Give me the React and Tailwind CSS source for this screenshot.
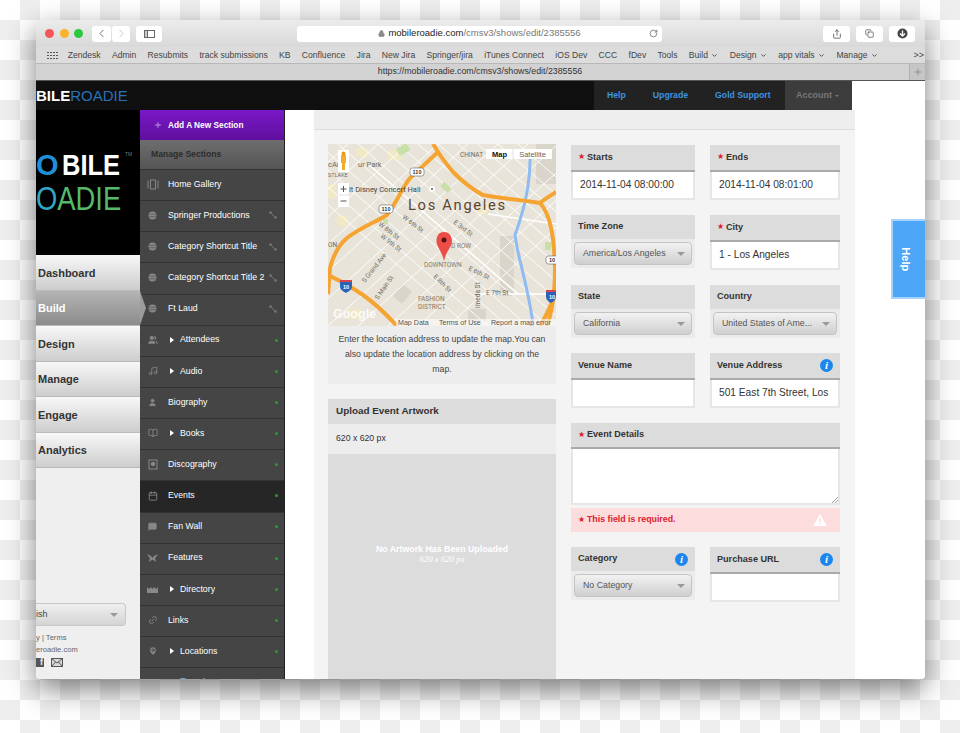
import { ChevronLeft, ChevronRight, Lock, RotateCw, Share, Copy, Plus, ChevronDown, Users, Music, User, BookOpen, Calendar, MessageSquare, Link2, MapPin } from "lucide-react";

const bookmarks = ["Zendesk", "Admin", "Resubmits", "track submissions", "KB", "Confluence", "Jira", "New Jira", "Springer/jira", "iTunes Connect", "iOS Dev", "CCC", "fDev", "Tools"];
const bookmarkMenus = ["Build", "Design", "app vitals", "Manage"];

const leftNav = [
  { label: "Dashboard" },
  { label: "Build", active: true },
  { label: "Design" },
  { label: "Manage" },
  { label: "Engage" },
  { label: "Analytics" },
];

// small drawn glyphs for the ones the icon set doesn't have
const GalleryIcon = () => (
  <svg width="12" height="11" viewBox="0 0 12 11" fill="none" stroke="currentColor">
    <rect x="3.500" y="1" width="5" height="9" />
    <path d="M1 1.500v8M11 1.500v8" />
  </svg>
);
const BallIcon = () => (
  <svg width="9" height="9" viewBox="0 0 9 9">
    <circle cx="4.500" cy="4.500" r="4" fill="currentColor" />
    <path d="M0.500 3.200h8M0.500 5.800h8" stroke="#454545" strokeWidth="0.600" />
  </svg>
);
const DiscIcon = () => (
  <svg width="10" height="11" viewBox="0 0 10 11" fill="none" stroke="currentColor">
    <rect x="1" y="1" width="8" height="9" />
    <circle cx="5" cy="5" r="1.800" fill="currentColor" />
  </svg>
);
const CrossIcon = () => (
  <svg width="11" height="9" viewBox="0 0 11 9" fill="currentColor">
    <path d="M0 0 L4 2 L5.500 4 L7 2 L11 0 L8 4.500 L9 8 L5.500 5.500 L2 8 L3 4.500Z" />
  </svg>
);
const CrownIcon = () => (
  <svg width="11" height="7" viewBox="0 0 11 7" fill="currentColor">
    <path d="M0 1 L2 3 L4 1 L5.500 3 L7 1 L9 3 L11 1 V7 H0Z" />
  </svg>
);

const sections = [
  { label: "Home Gallery", icon: GalleryIcon },
  { label: "Springer Productions", icon: BallIcon, link: true },
  { label: "Category Shortcut Title", icon: BallIcon, link: true },
  { label: "Category Shortcut Title 2", icon: BallIcon, link: true },
  { label: "Ft Laud", icon: BallIcon, link: true },
  { label: "Attendees", icon: () => <Users size={10} fill="currentColor" />, arrow: true, dot: true },
  { label: "Audio", icon: () => <Music size={10} />, arrow: true, dot: true },
  { label: "Biography", icon: () => <User size={9} fill="currentColor" />, dot: true },
  { label: "Books", icon: () => <BookOpen size={10} />, arrow: true, dot: true },
  { label: "Discography", icon: DiscIcon, dot: true },
  { label: "Events", icon: () => <Calendar size={10} />, dot: true, current: true },
  { label: "Fan Wall", icon: () => <MessageSquare size={9} fill="currentColor" />, dot: true },
  { label: "Features", icon: CrossIcon, dot: true },
  { label: "Directory", icon: CrownIcon, arrow: true, dot: true },
  { label: "Links", icon: () => <Link2 size={10} className="-rotate-45" />, dot: true },
  { label: "Locations", icon: () => <MapPin size={10} fill="currentColor" stroke="#454545" />, arrow: true, dot: true },
  { label: "Mailing List", icon: () => <Users size={10} />, dot: true },
];

const ToolButton = ({ children, className = "" }) => (
  <div className={`flex h-[16px] items-center justify-center rounded-[3px] bg-white text-[#555] ${className}`}>
    {children}
  </div>
);

const Star = () => <span className="w-[6px] font-['DejaVu_Sans',sans-serif] text-[8px] leading-none text-[#e0202c]">★</span>;

const InfoDot = () => (
  <span className="flex h-[13px] w-[13px] items-center justify-center rounded-full bg-[#1c86ee] font-['Liberation_Serif',serif] text-[11px] font-bold italic leading-none text-white">
    i
  </span>
);

const Label = ({ text, required, info, className = "" }) => (
  <div className={`flex items-center justify-between bg-[#dcdcdc] px-[7px] pt-px text-[9.100px] font-bold text-[#333] ${className}`}>
    <span className="flex items-center gap-[3px]">
      {required && <Star />}
      {text}
    </span>
    {info && <InfoDot />}
  </div>
);

const TextField = ({ label, value, required, info, className = "" }) => (
  <div className={className}>
    <Label text={label} required={required} info={info} className="h-[27px] border-b-2 border-[#aaa]" />
    <div className="flex h-[28px] items-center overflow-hidden whitespace-nowrap border-x-2 border-b-2 border-[#e6e6e6] bg-white px-[7px] pt-px text-[10.200px] text-[#333]">
      {value}
    </div>
  </div>
);

const SelectField = ({ label, value, info, className = "" }) => (
  <div className={`bg-[#ebebeb] ${className}`}>
    <Label text={label} info={info} className="h-[24px]" />
    <div className="p-[3px]">
      <div className="flex h-[23px] items-center justify-between rounded-[4px] border border-[#c4c4c4] bg-gradient-to-b from-[#f2f2f2] to-[#cfcfcf] pl-[8px] pr-[6px] pt-px text-[8.800px] text-[#555]">
        <span>{value}</span>
        <span className="h-0 w-0 border-x-[4px] border-t-[4px] border-x-transparent border-t-[#999]" />
      </div>
    </div>
  </div>
);

const streetsA = [-70, -50, -30, -10, 10, 30, 50, 70, 90, 110, 130, 150, 170, 190];
const streetsB = [20, 50, 80, 110, 140, 170, 200, 230, 260, 290, 320];

// rough street map, labels stay real text
const MapDrawing = () => (
  <svg viewBox="0 0 228 182" className="block h-[182px] w-[228px]">
    <rect width="228" height="182" fill="#e8e4da" />
    <g fill="#f1e8c6">
      <rect x="10" y="72" width="10" height="10" />
      <rect x="28" y="4" width="12" height="9" />
      <rect x="150" y="62" width="10" height="8" />
      <rect x="0" y="40" width="8" height="14" />
      <rect x="60" y="6" width="14" height="10" />
      <rect x="20" y="165" width="14" height="10" />
    </g>
    <g fill="#d9d5cb">
      <rect x="208" y="0" width="20" height="40" />
      <rect x="172" y="92" width="14" height="60" />
      <rect x="140" y="165" width="18" height="12" />
      <rect x="75" y="140" width="12" height="16" transform="rotate(40 75 140)" />
    </g>
    <g stroke="#ffffff" strokeWidth="0.900" fill="none">
      {streetsA.map((x) => <line key={x} x1={x} y1="0" x2={x + 210} y2="182" />)}
      {streetsB.map((x) => <line key={x} x1={x} y1="0" x2={x - 200} y2="182" />)}
    </g>
    <g stroke="#ffffff" strokeWidth="1.600" fill="none">
      <path d="M40 20 L190 150 M150 150 H228 M160 70 L228 80" />
    </g>
    <g fill="#c9dfa8">
      <rect x="68" y="5" width="12" height="8" transform="rotate(-30 68 5)" />
      <rect x="116" y="38" width="10" height="6" transform="rotate(40 116 38)" />
      <rect x="55" y="75" width="5" height="5" />
      <rect x="217" y="98" width="6" height="8" />
    </g>
    <path d="M202 5 C203 30 200 55 187 91 C190 115 197 130 204 173 L205 182" fill="none" stroke="#8ebcf2" strokeWidth="3" />
    <g fill="none" stroke="#f5a431" strokeWidth="4">
      <path d="M0 150 L2 124 C6 108 12 100 19 94 C35 82 48 78 59 71 C68 60 74 44 82 34 L110 8 L105 0" />
      <path d="M110 8 C115 16 120 22 125 28 C135 38 145 46 155 51 C170 54 195 56 212 59 C222 70 226 90 227 124 C227 145 225 165 219 182" />
      <path d="M212 59 C217 55 222 52 228 48" />
      <path d="M0 131 C15 138 25 144 35 151 C48 160 58 170 69 182" />
      <path d="M228 146 C224 160 218 172 212 182" />
    </g>
    <g fontFamily="Roboto, sans-serif" fill="#6f6a5f" fontSize="6.500">
      <text x="74" y="74" transform="rotate(38 74 74)">W 6th St</text>
      <text x="50" y="81" transform="rotate(38 50 81)">W 8th St</text>
      <text x="52" y="93" transform="rotate(38 52 93)">W 9th St</text>
      <text x="125" y="79" transform="rotate(38 125 79)">E 3rd St</text>
      <text x="140" y="126" transform="rotate(25 140 126)">E 6th St</text>
      <text x="158" y="151">E 7th St</text>
      <text x="105" y="133" transform="rotate(45 105 133)">E 8th St</text>
      <text x="37" y="139" transform="rotate(-52 37 139)">S Grand Ave</text>
      <text x="50" y="156" transform="rotate(-55 50 156)">S Main St</text>
      <text x="152" y="164" transform="rotate(-90 152 164)">imeda St</text>
      <g fill="#8a7a60">
        <text x="123" y="104">D ROW</text>
        <text x="96" y="123">DOWNTOWN</text>
        <text x="90" y="157">FASHION</text>
        <text x="90" y="164.500">DISTRICT</text>
      </g>
      <text x="0" y="23" fontSize="7.500">cAr</text>
      <text x="30" y="23" fontSize="7.500">ur Park</text>
      <text x="0" y="33" fontSize="5.500">STLAKE</text>
      <text x="0" y="103">ON</text>
      <text x="132" y="13">CHINAT</text>
      <text x="21" y="48" fontSize="7.500" fill="#444">lt Disney Concert Hall</text>
    </g>
    <circle cx="104" cy="45" r="3" fill="#fff" />
    <circle cx="104" cy="45" r="1" fill="#555" />
    <text x="80" y="66" fontFamily="Roboto, sans-serif" fontSize="14.700" letterSpacing="1.700" fill="#5b4632">Los Angeles</text>
    <g fontFamily="Liberation Sans, sans-serif" fontWeight="700" fontSize="5.500" textAnchor="middle" fill="#333">
      <rect x="82" y="24" width="14" height="8" rx="2.500" fill="#fff" stroke="#444" strokeWidth="0.500" />
      <text x="89" y="30">110</text>
      <rect x="51" y="61" width="14" height="8" rx="2.500" fill="#fff" stroke="#444" strokeWidth="0.500" />
      <text x="58" y="67">110</text>
      <rect x="218" y="112" width="12" height="8" rx="2.500" fill="#fff" stroke="#444" strokeWidth="0.500" />
      <text x="224" y="118">10</text>
    </g>
    <g fontFamily="Liberation Sans, sans-serif" fontWeight="700" fontSize="5.500" textAnchor="middle" fill="#fff">
      <path d="M12 136 h12 v6 c0 4 -3 5 -6 7 c-3 -2 -6 -3 -6 -7Z" fill="#2b63b8" />
      <rect x="12" y="136" width="12" height="2" fill="#d9434a" />
      <text x="18" y="145">10</text>
      <path d="M218 146 h10 v6 c0 4 -2 5 -5 7 c-3 -2 -5 -3 -5 -7Z" fill="#2b63b8" />
      <rect x="218" y="146" width="10" height="2" fill="#d9434a" />
      <text x="224" y="155">10</text>
    </g>
    <path d="M116 88 C110 88 108.500 93 108.500 97 C108.500 103 114 107 116 117 C118 107 124 103 124 97 C124 93 122 88 116 88Z" fill="#ec4d47" />
    <circle cx="116" cy="96" r="2.500" fill="#501512" />
    <text x="5" y="174" fontFamily="Liberation Sans, sans-serif" fontWeight="700" fontSize="12.500" fill="#fff" fillOpacity="0.850">Google</text>
    <rect x="68" y="175" width="160" height="7" fill="#fff" fillOpacity="0.550" />
    <g fontFamily="Liberation Sans, sans-serif" fontSize="7.100" fill="#555">
      <text x="70" y="181">Map Data</text>
      <text x="111" y="181">Terms of Use</text>
      <text x="163" y="181">Report a map error</text>
    </g>
    <rect x="158" y="5" width="66" height="10" fill="#fff" />
    <line x1="185" y1="5" x2="185" y2="15" stroke="#ccc" strokeWidth="0.600" />
    <text x="171.500" y="13" fontFamily="Liberation Sans, sans-serif" fontSize="7.500" fontWeight="700" textAnchor="middle" fill="#111">Map</text>
    <text x="204.500" y="13" fontFamily="Liberation Sans, sans-serif" fontSize="7.500" textAnchor="middle" fill="#666">Satellite</text>
    <rect x="10" y="6" width="11" height="22" fill="#fff" />
    <path d="M13 11 h5 v8 h-1 v7 h-3 v-7 h-1Z" fill="#f2ab2e" />
    <circle cx="15.500" cy="9.500" r="2" fill="#e89a1c" />
    <rect x="10" y="39" width="11" height="24" fill="#fff" />
    <line x1="10" y1="51" x2="21" y2="51" stroke="#ccc" strokeWidth="0.600" />
    <path d="M12.500 45 h6 M15.500 42 v6 M12.500 57 h6" stroke="#555" strokeWidth="1" />
  </svg>
);

const App = () => {
  return (
    <div className="h-[733px] w-[960px] overflow-hidden bg-[conic-gradient(#eeeeee_25%,#ffffff_25%_50%,#eeeeee_50%_75%,#ffffff_75%)] bg-[length:40px_40px] pl-[36px] pt-[20px] font-['Liberation_Sans',sans-serif]">
      <div className="flex h-[659px] w-[889px] flex-col overflow-hidden rounded-[4px] bg-white shadow-[0_10px_28px_rgba(0,0,0,0.5)]">
        {/* safari toolbar */}
        <div className="flex h-[27px] items-center bg-gradient-to-b from-[#ececec] to-[#d8d8d8] pl-[9px] pr-[6px]">
          <div className="flex gap-[5.500px]">
            <span className="h-[9px] w-[9px] rounded-full bg-[#f4575a]" />
            <span className="h-[9px] w-[9px] rounded-full bg-[#f9b42c]" />
            <span className="h-[9px] w-[9px] rounded-full bg-[#2ec840]" />
          </div>
          <div className="ml-[9px] flex gap-px">
            <ToolButton className="w-[19px]"><ChevronLeft size={13} strokeWidth={1.500} /></ToolButton>
            <ToolButton className="w-[18px] text-[#bbb]"><ChevronRight size={13} strokeWidth={1.500} /></ToolButton>
          </div>
          <ToolButton className="ml-[6px] w-[26px]">
            <span className="flex h-[8px] w-[11px] border border-[#666]"><span className="w-[3px] border-r border-[#666] bg-[#ccc]" /></span>
          </ToolButton>
          <div className="relative ml-[135px] flex h-[16px] w-[365px] items-center justify-center rounded-[3px] bg-white text-[9.500px] text-[#777]">
            <Lock size={7} className="mr-[3px] text-[#888]" fill="#888" />
            <span><span className="text-[#222]">mobileroadie.com</span>/cmsv3/shows/edit/2385556</span>
            <RotateCw size={9} className="absolute right-[4px] text-[#666]" />
          </div>
          <ToolButton className="ml-[161px] w-[27px]"><Share size={10} /></ToolButton>
          <ToolButton className="ml-[6px] w-[27px]"><Copy size={9} /></ToolButton>
          <ToolButton className="ml-[6px] w-[26px]">
            <svg width="11" height="11" viewBox="0 0 11 11">
              <circle cx="5.500" cy="5.500" r="5" fill="#444" />
              <path d="M5.500 2.500v5M3 5.500l2.500 2.500 2.500-2.500" stroke="#fff" strokeWidth="1.300" fill="none" />
            </svg>
          </ToolButton>
        </div>

        {/* bookmarks */}
        <div className="relative flex h-[17px] items-center border-b border-[#b8b8b8] bg-[#dcdcdc] pt-px text-[8.600px] text-[#444]">
          <span className="ml-[11px] grid grid-cols-4 gap-[1.300px]">
            {Array.from({ length: 12 }).map((_, i) => (
              <span key={i} className="h-[1.700px] w-[1.700px] bg-[#555]" />
            ))}
          </span>
          <div className="ml-[10px] flex gap-[11.300px]">
            {bookmarks.map((name) => <span key={name}>{name}</span>)}
            {bookmarkMenus.map((name) => (
              <span key={name} className="flex items-center gap-[3.500px]">{name} <ChevronDown size={7} strokeWidth={3} /></span>
            ))}
          </div>
          <span className="absolute right-[1px] text-[9px]">&gt;&gt;</span>
        </div>

        {/* tab strip */}
        <div className="flex h-[17px] items-center border-b border-[#555] bg-[#d2d2d2] text-[8.800px] text-[#333]">
          <span className="flex-1 pl-[15px] text-center">https://mobileroadie.com/cmsv3/shows/edit/2385556</span>
          <span className="flex h-full w-[16px] items-center justify-center border-l border-[#b0b0b0] bg-[#c6c6c6] text-[#888]"><Plus size={10} /></span>
        </div>

        {/* app header */}
        <div className="flex h-[29px] items-stretch bg-white">
          <div className="flex w-[558px] items-center overflow-hidden bg-[#0f0f0f] text-[15px] leading-none">
            <span className="font-bold text-white">BILE</span>
            <span className="font-light text-[#2a72b8]">ROADIE</span>
          </div>
          <div className="flex w-[191px] items-center bg-[#222] pl-[13px] text-[8.700px] font-bold text-[#3d94e0]">
            <span>Help</span>
            <span className="ml-[27px]">Upgrade</span>
            <span className="ml-[27px]">Gold Support</span>
          </div>
          <div className="flex w-[67px] items-center gap-[3px] bg-[#3c3c3c] pl-[11px] text-[9px] font-bold text-[#777]">
            Account
            <span className="h-0 w-0 border-x-[2px] border-t-[2px] border-x-transparent border-t-[#777]" />
          </div>
        </div>

        <div className="flex min-h-0 flex-1">
          {/* left column */}
          <div className="relative z-10 flex w-[104px] shrink-0 flex-col bg-[#efefef]">
            <div className="relative flex h-[145px] flex-col justify-center overflow-hidden bg-black leading-none">
              <div className="flex whitespace-nowrap text-[29px] font-bold text-white">
                <span className="w-[26px] text-[#1f8fd8]">O</span>
                <span className="origin-left scale-x-[0.88]">BILE</span>
              </div>
              <div className="mt-[2px] flex origin-left scale-x-[0.83] whitespace-nowrap text-[33px] font-light text-[#55b96a]">
                <span className="text-[#2fa7c4]">O</span>ADIE
              </div>
              <span className="absolute left-[89px] top-[42px] text-[5px] text-[#777]">TM</span>
            </div>
            {leftNav.map((item) => (
              <div
                key={item.label}
                className={`relative flex h-[35.500px] items-center border-b border-[#bbb] pl-[2px] pt-[1px] text-[11px] font-bold ${item.active ? "bg-gradient-to-b from-[#b5b5b5] to-[#8b8b8b] text-white" : "bg-gradient-to-b from-[#f8f8f8] to-[#cdcdcd] text-[#333]"}`}
              >
                {item.label}
                {item.active && (
                  <span className="absolute left-full top-0 h-0 w-0 border-y-[17px] border-l-[6px] border-y-transparent border-l-[#9c9c9c]" />
                )}
              </div>
            ))}
            <div className="mt-auto pb-[12px]">
              <div className="flex h-[23px] w-[90px] items-center justify-between rounded-r-[4px] border border-l-0 border-[#c8c8c8] bg-gradient-to-b from-[#f0f0f0] to-[#d4d4d4] pr-[7px] text-[9px] text-[#444]">
                <span>ish</span>
                <span className="h-0 w-0 border-x-[4px] border-t-[4px] border-x-transparent border-t-[#999]" />
              </div>
              <div className="mt-[6px] text-[7.600px] leading-[12px] text-[#666]">
                <div>y | Terms</div>
                <div>eroadie.com</div>
              </div>
              <div className="mt-[2px] flex items-center gap-[7px]">
                <span className="flex h-[9px] w-[8px] items-end justify-end bg-[#555] pr-[1px] text-[9px] font-bold leading-none text-[#efefef]">f</span>
                <svg width="12" height="9" viewBox="0 0 12 9" fill="#d8d8d8" stroke="#555">
                  <rect x="0.500" y="0.500" width="11" height="8" />
                  <path d="M0.500 0.500L6 5l5.500-4.500M0.500 8.500L4.500 4M11.500 8.500L7.500 4" fill="none" />
                </svg>
              </div>
            </div>
          </div>

          {/* section list */}
          <div className="flex w-[145px] shrink-0 flex-col overflow-hidden border-r border-[#222] bg-[#444]">
            <div className="flex h-[30px] shrink-0 items-center bg-gradient-to-b from-[#7a18c8] to-[#5f0f9e] pl-[14px] text-[8.300px] font-bold text-white">
              <Plus size={8} strokeWidth={4} className="mr-[6px] text-[#a878d8]" />
              Add A New Section
            </div>
            <div className="flex h-[29px] shrink-0 items-center bg-gradient-to-b from-[#6e6e6e] to-[#555] pl-[11px] text-[8.600px] font-bold text-[#2c2c2c]">
              Manage Sections
            </div>
            {sections.map((s) => {
              const Icon = s.icon;
              return (
                <div
                  key={s.label}
                  className={`flex h-[31.150px] shrink-0 items-center border-t border-[#333] pb-[1.500px] pr-[5px] text-[8.750px] text-white ${s.current ? "bg-[#262626]" : "bg-[#454545]"}`}
                >
                  <span className="flex w-[28px] shrink-0 justify-center pr-[3px] text-[#888]"><Icon /></span>
                  {s.arrow && <span className="ml-[2px] mr-[6px] h-0 w-0 border-y-[3.500px] border-l-[4px] border-y-transparent border-l-white" />}
                  <span className="flex-1 whitespace-nowrap">{s.label}</span>
                  {s.link && (
                    <svg width="8" height="8" viewBox="0 0 8 8" className="mr-[2px] text-[#777]">
                      <path d="M1.500 1.500L6.500 6.500" stroke="currentColor" />
                      <circle cx="1.500" cy="1.500" r="1.300" fill="currentColor" />
                      <circle cx="6.500" cy="6.500" r="1.300" fill="currentColor" />
                    </svg>
                  )}
                  {s.dot && <span className="mr-[1px] h-[3px] w-[3px] rounded-full bg-[#2f9a2f]" />}
                </div>
              );
            })}
          </div>

          {/* main content */}
          <div className="relative min-w-0 flex-1 bg-white pl-[29px]">
            <div className="h-full w-[541px] bg-[#f4f4f4]">
              <div className="h-[20px] border-b border-[#ddd] bg-[#eeeeee]" />
              <div className="flex gap-[15px] pl-[14px] pt-[14px]">
                {/* map column */}
                <div className="w-[228px]">
                  <MapDrawing />
                  <div className="h-[58px] bg-[#ededed] px-[8px] pt-[6px] text-center text-[8.700px] leading-[15px] text-[#444]">
                    Enter the location address to update the map.You can also update the location address by clicking on the map.
                  </div>
                  <div className="mt-[15px] flex h-[25px] items-center bg-[#dcdcdc] px-[8px] text-[9.900px] font-bold text-[#333]">
                    Upload Event Artwork
                  </div>
                  <div className="flex h-[30px] items-center bg-[#ededed] px-[8px] text-[8.700px] text-[#333]">620 x 620 px</div>
                  <div className="flex h-[226px] flex-col items-center bg-[#dcdcdc] pt-[91px] text-[8.800px] font-bold leading-[9px] text-white">
                    <span>No Artwork Has Been Uploaded</span>
                    <span className="mt-[1px] font-['Liberation_Serif',serif] font-normal italic">620 x 620 px</span>
                  </div>
                </div>

                {/* form column */}
                <div className="mt-[0.500px] w-[269px]">
                  <div className="flex justify-between">
                    <TextField label="Starts" required value="2014-11-04 08:00:00" className="w-[124px]" />
                    <TextField label="Ends" required value="2014-11-04 08:01:00" className="w-[130px]" />
                  </div>
                  <div className="mt-[15px] flex items-start justify-between">
                    <SelectField label="Time Zone" value="America/Los Angeles" className="w-[124px]" />
                    <TextField label="City" required value="1 - Los Angeles" className="w-[130px]" />
                  </div>
                  <div className="mt-[15px] flex items-start justify-between">
                    <SelectField label="State" value="California" className="w-[124px]" />
                    <SelectField label="Country" value="United States of Ame..." className="w-[130px]" />
                  </div>
                  <div className="mt-[15px] flex justify-between">
                    <TextField label="Venue Name" className="w-[124px]" />
                    <TextField label="Venue Address" info value="501 East 7th Street, Los" className="w-[130px]" />
                  </div>
                  <div className="mt-[15px]">
                    <Label text="Event Details" required className="h-[26px] border-b-2 border-[#aaa]" />
                    <div className="relative h-[56px] border-x-2 border-b-2 border-[#e6e6e6] bg-white">
                      <svg width="7" height="7" viewBox="0 0 7 7" className="absolute bottom-0 right-0 text-[#888]">
                        <path d="M1 7L7 1M4 7L7 4" stroke="currentColor" strokeWidth="0.800" />
                      </svg>
                    </div>
                    <div className="mt-[3px] flex h-[24px] items-center justify-between bg-[#fcdcdc] pl-[7px] pr-[13px] pt-px text-[8.800px] font-bold text-[#d9232e]">
                      <span className="flex items-center gap-[3px]"><Star />This field is required.</span>
                      <svg width="14" height="12" viewBox="0 0 14 12">
                        <path d="M7 0L14 12H0Z" fill="#fff" />
                        <path d="M7 4v4M7 9v1.500" stroke="#fcdcdc" strokeWidth="1.500" />
                      </svg>
                    </div>
                  </div>
                  <div className="mt-[15px] flex items-start justify-between">
                    <SelectField label="Category" value="No Category" info className="w-[124px]" />
                    <TextField label="Purchase URL" info className="w-[130px]" />
                  </div>
                </div>
              </div>
            </div>
            {/* floating help tab */}
            <div className="absolute right-0 top-[109px] flex h-[80px] w-[34px] items-center justify-center border-[2px] border-r-0 border-[#a6d2fb] bg-[#4ea6f8] pr-[6px] text-[11px] font-bold text-white">
              <span className="rotate-90">Help</span>
            </div>
          </div>
        </div>
      </div>
    </div>
  );
};

export default App;
